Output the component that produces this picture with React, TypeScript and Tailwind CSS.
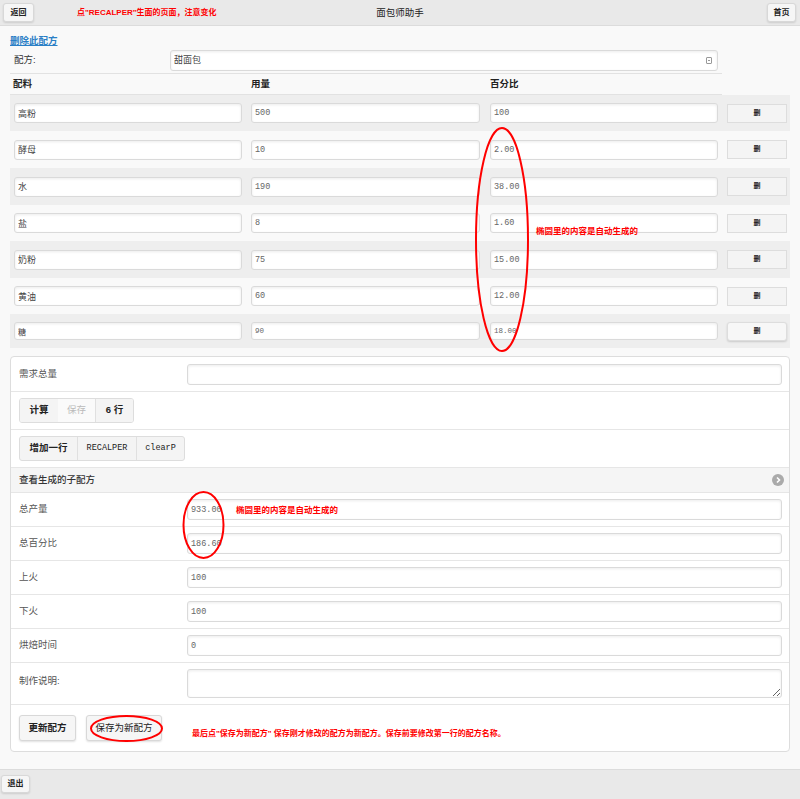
import React from 'react';

const rows = [
  { name: '高粉', qty: '500', pct: '100', h: 'h-[36px]' },
  { name: '酵母', qty: '10', pct: '2.00', h: 'h-[37px]' },
  { name: '水', qty: '190', pct: '38.00', h: 'h-[37px]' },
  { name: '盐', qty: '8', pct: '1.60', h: 'h-[36px]' },
  { name: '奶粉', qty: '75', pct: '15.00', h: 'h-[37px]' },
  { name: '黄油', qty: '60', pct: '12.00', h: 'h-[36px]' },
  { name: '糖', qty: '90', pct: '18.00', h: 'h-[34px]' },
];

const mono = "font-['Liberation_Mono','Noto_Sans_CJK_SC',monospace] text-[#666]";
const inputCls =
  'bg-white border border-[#dadada] rounded-[3px] shadow-[inset_0_1px_3px_rgba(0,0,0,0.08)] px-[3px] text-[#444] outline-none';

const Btn = ({ children, className = '' }: { children: React.ReactNode; className?: string }) => (
  <button
    className={`bg-[#f6f6f6] border border-[#d8d8d8] rounded-[3px] shadow-[0_1px_2px_rgba(0,0,0,0.12)] font-bold text-[#222] ${className}`}
  >
    {children}
  </button>
);

const FormRow = ({ label, value, numeric }: { label: string; value: string; numeric?: boolean }) => (
  <div className="h-[34px] flex items-center pl-[8px] pr-[7px] border-b border-[#e6e6e6]">
    <div className="w-[168px] text-[9.5px] text-[#555]">{label}</div>
    <input
      readOnly
      value={value}
      className={`${inputCls} flex-1 h-[21px] text-[8.5px] ${numeric ? mono : ''}`}
    />
  </div>
);

export default function App() {
  return (
    <div className="relative w-[800px] h-[799px] flex flex-col bg-[#f9f9f9] font-['Liberation_Sans','Noto_Sans_CJK_SC',sans-serif] overflow-hidden">
      {/* header */}
      <div className="h-[26px] shrink-0 grid grid-cols-[1fr_auto_1fr] items-center bg-[#e9e9e9] border-b border-[#dcdcdc]">
        <div className="flex items-center pl-[3px]">
          <Btn className="w-[31px] h-[19px] text-[8px]">返回</Btn>
          <span className="ml-[43px] text-[8px] font-bold text-[#ff0000]">点"RECALPER"生面的页面，注意变化</span>
        </div>
        <div className="text-[9.5px] text-[#222] pt-[1px]">面包师助手</div>
        <div className="flex justify-end pr-[4px]">
          <Btn className="w-[29px] h-[19px] text-[8px]">首页</Btn>
        </div>
      </div>

      {/* main */}
      <div className="flex-1 flex flex-col px-[10px] pt-[8px]">
        <a className="h-[14px] text-[9.5px] font-bold text-[#2a7fc6] underline leading-[14px]">删除此配方</a>
        <div className="h-[26px] w-[712px] flex items-center pl-[4px] border-b border-[#e2e2e2]">
          <div className="w-[156px] text-[9.5px] text-[#333]">配方:</div>
          <div className={`${inputCls} w-[548px] h-[21px] flex items-center justify-between text-[9px]`}>
            <span>甜面包</span>
            <span className="w-[6px] h-[7px] border border-[#999] rounded-[1px] flex items-center justify-center mr-[2px]">
              <span className="w-[2px] h-[1px] bg-[#999]" />
            </span>
          </div>
        </div>
        <div className="h-[21px] w-[712px] flex items-center font-bold text-[9.5px] text-[#222] border-b border-[#e2e2e2]">
          <div className="w-[241px] pl-[3px]">配料</div>
          <div className="w-[239px]">用量</div>
          <div>百分比</div>
        </div>

        {rows.map((r, i) => {
          const last = i === rows.length - 1;
          return (
            <div
              key={r.name}
              className={`${r.h} w-[780px] flex items-center pl-[4px] ${i % 2 === 0 ? 'bg-[#eeeeee]' : ''}`}
            >
              <input
                readOnly
                value={r.name}
                className={`${inputCls} w-[228px] ${last ? 'h-[18px] text-[8px]' : 'h-[20px] text-[9px]'}`}
              />
              <input
                readOnly
                value={r.qty}
                className={`${inputCls} ${mono} ml-[9px] w-[229px] ${last ? 'h-[18px] text-[7.5px]' : 'h-[20px] text-[8.5px]'}`}
              />
              <input
                readOnly
                value={r.pct}
                className={`${inputCls} ${mono} ml-[10px] w-[228px] ${last ? 'h-[18px] text-[7.5px]' : 'h-[20px] text-[8.5px]'}`}
              />
              <button
                className={`ml-[9px] w-[60px] h-[19px] bg-[#f4f4f4] border border-[#dddddd] text-[7px] font-bold text-[#222] ${
                  last ? 'rounded-[3px] shadow-[0_1px_2px_rgba(0,0,0,0.15)] bg-[#f7f7f7]' : ''
                }`}
              >
                删
              </button>
            </div>
          );
        })}

        {/* card */}
        <div className="mt-[8px] w-[780px] bg-white border border-[#dddddd] rounded-[4px] flex flex-col">
          <div className="h-[35px] flex items-center pl-[8px] pr-[7px] border-b border-[#e6e6e6]">
            <div className="w-[168px] text-[9.5px] text-[#555]">需求总量</div>
            <input readOnly value="" className={`${inputCls} flex-1 h-[21px]`} />
          </div>
          <div className="h-[38px] flex items-center pl-[8px] border-b border-[#e6e6e6]">
            <div className="flex h-[25px] border border-[#dddddd] rounded-[3px] overflow-hidden text-[9.5px] font-bold">
              <div className="w-[38px] flex items-center justify-center bg-[#f4f4f4] text-[#222]">计算</div>
              <div className="w-[37px] flex items-center justify-center bg-[#fafafa] text-[#bbbbbb] font-normal">保存</div>
              <div className="w-[38px] flex items-center justify-center bg-[#f4f4f4] text-[#222] border-l border-[#e0e0e0]">6 行</div>
            </div>
          </div>
          <div className="h-[38px] flex items-center pl-[8px] border-b border-[#e6e6e6]">
            <div className="flex h-[25px] border border-[#dddddd] rounded-[3px] overflow-hidden bg-[#f4f4f4] text-[#222]">
              <div className="w-[57px] flex items-center justify-center text-[9.5px] font-bold">增加一行</div>
              <div className="w-[59px] flex items-center justify-center border-l border-[#e0e0e0] text-[8.5px] font-['Liberation_Mono',monospace]">RECALPER</div>
              <div className="w-[48px] flex items-center justify-center border-l border-[#e0e0e0] text-[8.5px] font-['Liberation_Mono',monospace]">clearP</div>
            </div>
          </div>
          <div className="h-[25px] flex items-center justify-between pl-[8px] pr-[5px] bg-[#f5f5f5] border-b border-[#e6e6e6]">
            <span className="text-[9.5px] font-medium text-[#333]">查看生成的子配方</span>
            <span className="w-[12px] h-[12px] rounded-full bg-[#aaaaaa] flex items-center justify-center">
              <svg width="8" height="8" viewBox="0 0 8 8">
                <path d="M3 1.5 L5.5 4 L3 6.5" stroke="white" strokeWidth="1.6" fill="none" />
              </svg>
            </span>
          </div>
          <FormRow label="总产量" value="933.00" numeric />
          <FormRow label="总百分比" value="186.60" numeric />
          <FormRow label="上火" value="100" numeric />
          <FormRow label="下火" value="100" numeric />
          <FormRow label="烘焙时间" value="0" numeric />
          <div className="h-[42px] flex items-start pt-[6px] pl-[8px] pr-[7px] border-b border-[#e6e6e6]">
            <div className="w-[168px] text-[9.5px] text-[#555] pt-[5px]">制作说明:</div>
            <textarea readOnly className={`${inputCls} flex-1 h-[29px] resize-y`} />
          </div>
          <div className="h-[46px] flex items-center pl-[8px]">
            <Btn className="w-[57px] h-[26px] text-[9.5px] bg-[#f4f4f4]">更新配方</Btn>
            <Btn className="ml-[10px] w-[76px] h-[26px] text-[9.5px] bg-[#f4f4f4] font-normal">保存为新配方</Btn>
            <span className="ml-[30px] mt-[12px] text-[8px] font-bold text-[#ff0000]">
              最后点"保存为新配方" 保存刚才修改的配方为新配方。保存前要修改第一行的配方名称。
            </span>
          </div>
        </div>
      </div>

      {/* footer */}
      <div className="h-[30px] shrink-0 bg-[#e9e9e9] border-t border-[#dcdcdc] flex items-start pt-[5px] pl-[1px]">
        <Btn className="w-[29px] h-[18px] text-[8px]">退出</Btn>
      </div>

      {/* annotations */}
      <svg className="absolute inset-0 pointer-events-none" width="800" height="799">
        <ellipse cx="502" cy="239.5" rx="26" ry="111.5" stroke="#ff0000" strokeWidth="2" fill="none" />
        <ellipse cx="203.5" cy="525" rx="20" ry="33" stroke="#ff0000" strokeWidth="2" fill="none" />
        <ellipse cx="126.5" cy="728.5" rx="35.5" ry="12.5" stroke="#ff0000" strokeWidth="2" fill="none" />
      </svg>
      <span className="absolute left-[536px] top-[225px] text-[8.5px] font-bold text-[#ff0000]">椭圆里的内容是自动生成的</span>
      <span className="absolute left-[236px] top-[504px] text-[8.5px] font-bold text-[#ff0000]">椭圆里的内容是自动生成的</span>
    </div>
  );
}
